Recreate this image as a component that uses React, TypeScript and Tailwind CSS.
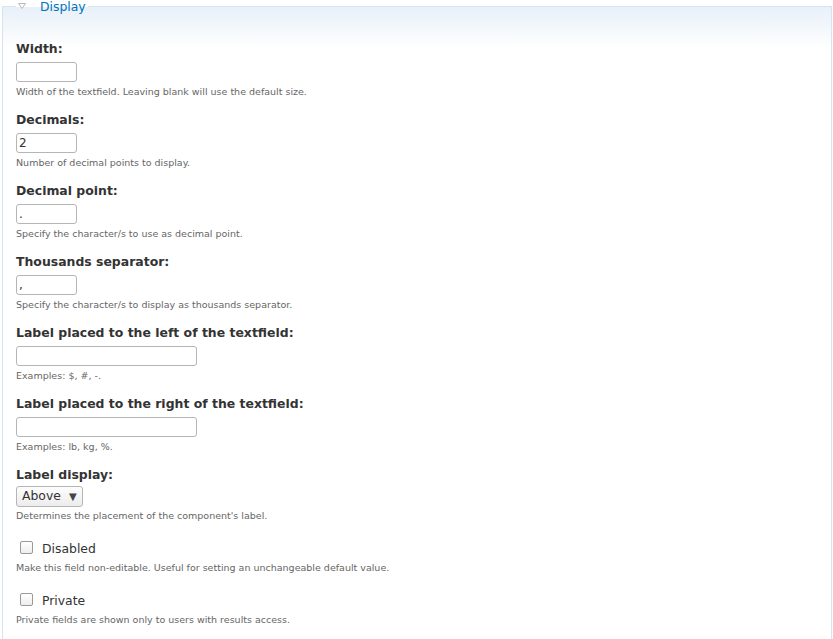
import React from 'react';

type Field = {
  label: string;
  value?: string;
  wide?: boolean;
  description: string;
};

const FIELDS: Field[] = [
  { label: 'Width:', description: 'Width of the textfield. Leaving blank will use the default size.' },
  { label: 'Decimals:', value: '2', description: 'Number of decimal points to display.' },
  { label: 'Decimal point:', value: '.', description: 'Specify the character/s to use as decimal point.' },
  { label: 'Thousands separator:', value: ',', description: 'Specify the character/s to display as thousands separator.' },
  { label: 'Label placed to the left of the textfield:', wide: true, description: 'Examples: $, #, -.' },
  { label: 'Label placed to the right of the textfield:', wide: true, description: 'Examples: lb, kg, %.' },
];

const CHECKS = [
  { label: 'Disabled', description: 'Make this field non-editable. Useful for setting an unchangeable default value.' },
  { label: 'Private', description: 'Private fields are shown only to users with results access.' },
];

const Description = ({ children, className = 'mt-[4px]' }: { children: React.ReactNode; className?: string }) => (
  <div className={`${className} text-[9.5px] leading-[12px] text-[#666]`}>{children}</div>
);

export default function App() {
  return (
    <div className="min-h-[639px] bg-white pl-[2px] pr-px font-['DejaVu_Sans',sans-serif] text-[#333]">
      <fieldset className="min-h-[660px] border border-[#d6e4f1] bg-[linear-gradient(to_bottom,#e8f0f8,#ffffff_42px)] pl-[13px] pt-[27px]">
        <legend className="h-[13px] pl-[2px] pr-[2px] text-[12.4px] leading-[13px] text-[#0074bd]">
          <svg width="8" height="6" viewBox="0 0 8 6" className="inline-block align-[2px]">
            <path d="M0.5 0.5 H7.5 L4 5.5 Z" fill="#fff" stroke="#b8b8b8" strokeWidth="1" />
          </svg>
          <span className="ml-[14px]">Display</span>
        </legend>

        {FIELDS.map((f) => (
          <div key={f.label} className="mb-[13px]">
            <label className="block text-[12.45px] font-bold leading-[18px] text-[#333]">{f.label}</label>
            <input
              type="text"
              defaultValue={f.value ?? ''}
              className={`mt-[4px] block h-[20px] rounded-[3px] border border-[#b5b5b5] bg-white px-[2px] text-[12px] text-[#333] outline-none ${
                f.wide ? 'w-[181px]' : 'w-[61px]'
              }`}
            />
            <Description>{f.description}</Description>
          </div>
        ))}

        <div className="mb-[14px]">
          <label className="block text-[12.45px] font-bold leading-[18px] text-[#333]">Label display:</label>
          <div className="mt-[2px] flex h-[21px] w-[67px] items-center rounded-[3px] border border-[#b5b5b5] bg-[linear-gradient(to_bottom,#fdfdfd,#ececec)] pl-[5px] text-[12.4px] text-[#333]">
            <span>Above</span>
            <span className="ml-[8px] text-[10px] text-[#444]">▼</span>
          </div>
          <Description className="mt-[3px]">Determines the placement of the component's label.</Description>
        </div>

        {CHECKS.map((c) => (
          <div key={c.label} className="mb-[14px] pt-[2px]">
            <label className="flex h-[18px] items-center text-[12.4px] text-[#333]">
              <input
                type="checkbox"
                className="ml-[4px] h-[13px] w-[13px] appearance-none rounded-[2px] border border-[#999] bg-[linear-gradient(to_bottom,#ffffff,#eeeeee)]"
              />
              <span className="ml-[9px] mt-[5px]">{c.label}</span>
            </label>
            <Description className="mt-[6px]">{c.description}</Description>
          </div>
        ))}
      </fieldset>
    </div>
  );
}
